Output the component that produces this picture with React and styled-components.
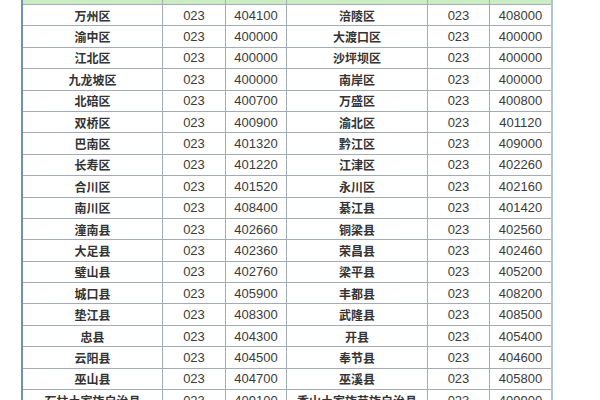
import React from 'react';
import styled, { createGlobalStyle } from 'styled-components';

const left = [
  ['万州区', '404100'],
  ['渝中区', '400000'],
  ['江北区', '400000'],
  ['九龙坡区', '400000'],
  ['北碚区', '400700'],
  ['双桥区', '400900'],
  ['巴南区', '401320'],
  ['长寿区', '401220'],
  ['合川区', '401520'],
  ['南川区', '408400'],
  ['潼南县', '402660'],
  ['大足县', '402360'],
  ['璧山县', '402760'],
  ['城口县', '405900'],
  ['垫江县', '408300'],
  ['忠县', '404300'],
  ['云阳县', '404500'],
  ['巫山县', '404700'],
  ['石柱土家族自治县', '409100'],
];

const right = [
  ['涪陵区', '408000'],
  ['大渡口区', '400000'],
  ['沙坪坝区', '400000'],
  ['南岸区', '400000'],
  ['万盛区', '400800'],
  ['渝北区', '401120'],
  ['黔江区', '409000'],
  ['江津区', '402260'],
  ['永川区', '402160'],
  ['綦江县', '401420'],
  ['铜梁县', '402560'],
  ['荣昌县', '402460'],
  ['梁平县', '405200'],
  ['丰都县', '408200'],
  ['武隆县', '408500'],
  ['开县', '405400'],
  ['奉节县', '404600'],
  ['巫溪县', '405800'],
  ['秀山土家族苗族自治县', '409900'],
];

const GlobalStyle = createGlobalStyle`
  html, body {
    margin: 0;
    padding: 0;
    background: #ffffff;
    overflow: hidden;
  }
`;

const Page = styled.div`
  width: 600px;
  height: 400px;
  overflow: hidden;
  background: #fff;
`;

const Table = styled.div`
  margin-left: 21px;
  width: 528px;
  border-left: 2px solid #7391b6;
  border-right: 2px solid #aec4de;
`;

const Row = styled.div`
  display: grid;
  grid-template-columns: 140px 63px 61px 141px 62px 61px;
  height: ${p => (p.$strip ? '5px' : '21.4px')};
  background: ${p => (p.$strip ? '#cbecc3' : '#fff')};
`;

const Cell = styled.div`
  display: flex;
  align-items: center;
  justify-content: center;
  border-right: 1px solid #a3acb4;
  border-bottom: 1px solid #a3acb4;
  color: #2e2e2e;
  white-space: nowrap;
  overflow: hidden;

  &:last-child {
    border-right: none;
  }
`;

const Name = styled(Cell)`
  font-family: "Noto Sans CJK SC", sans-serif;
  font-weight: 700;
  font-size: 12px;
  color: #333;
`;

const Num = styled(Cell)`
  font-family: "Liberation Sans Narrow", "Liberation Sans", sans-serif;
  font-size: 13px;
  color: #3a3a3a;
`;

const App = () => {
  return (
    <Page>
      <GlobalStyle />
      <Table>
        <Row $strip>
          {[0, 1, 2, 3, 4, 5].map(i => (
            <Cell key={i} />
          ))}
        </Row>
        {left.map((l, i) => (
          <Row key={l[0]}>
            <Name>{l[0]}</Name>
            <Num>023</Num>
            <Num>{l[1]}</Num>
            <Name>{right[i][0]}</Name>
            <Num>023</Num>
            <Num>{right[i][1]}</Num>
          </Row>
        ))}
      </Table>
    </Page>
  );
};

export default App;
